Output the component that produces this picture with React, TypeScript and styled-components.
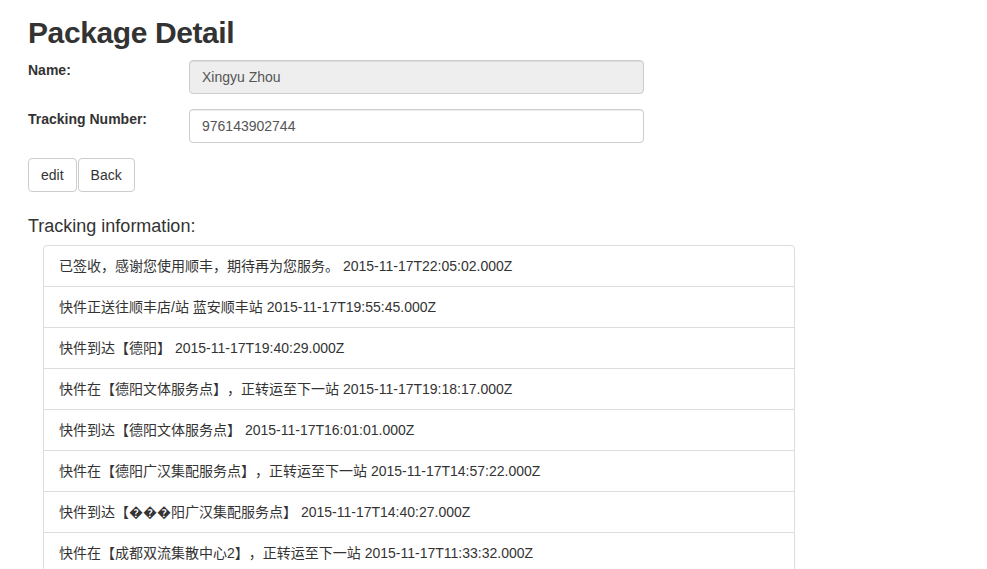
import React from 'react';
import styled, { createGlobalStyle } from 'styled-components';

const GlobalStyle = createGlobalStyle`
  html, body {
    margin: 0;
    padding: 0;
    background: #fff;
  }
  body {
    font-family: "Liberation Sans", Arial, "Noto Sans CJK SC", sans-serif;
    font-size: 14px;
    line-height: 1.42857;
    color: #333;
    text-spacing-trim: space-all;
  }
  * {
    box-sizing: border-box;
  }
`;

interface TrackingEvent {
  remark: string;
  time: string;
}

const events: TrackingEvent[] = [
  { remark: '已签收，感谢您使用顺丰，期待再为您服务。', time: '2015-11-17T22:05:02.000Z' },
  { remark: '快件正送往顺丰店/站 蓝安顺丰站', time: '2015-11-17T19:55:45.000Z' },
  { remark: '快件到达【德阳】', time: '2015-11-17T19:40:29.000Z' },
  { remark: '快件在【德阳文体服务点】，正转运至下一站', time: '2015-11-17T19:18:17.000Z' },
  { remark: '快件到达【德阳文体服务点】', time: '2015-11-17T16:01:01.000Z' },
  { remark: '快件在【德阳广汉集配服务点】，正转运至下一站', time: '2015-11-17T14:57:22.000Z' },
  { remark: '快件到达【���阳广汉集配服务点】', time: '2015-11-17T14:40:27.000Z' },
  { remark: '快件在【成都双流集散中心2】，正转运至下一站', time: '2015-11-17T11:33:32.000Z' },
];

export default function App() {
  return (
    <>
      <GlobalStyle />
      <Page>
        <Title>Package Detail</Title>
        <FormRow>
          <Label>Name:</Label>
          <Input value="Xingyu Zhou" disabled readOnly />
        </FormRow>
        <FormRow>
          <Label>Tracking Number:</Label>
          <Input value="976143902744" readOnly />
        </FormRow>
        <ButtonRow>
          <Button>edit</Button>
          <Button>Back</Button>
        </ButtonRow>
        <SectionTitle>Tracking information:</SectionTitle>
        <ListGroup>
          {events.map((e, i) => (
            <ListItem key={i}>
              {e.remark} {e.time}
            </ListItem>
          ))}
        </ListGroup>
      </Page>
    </>
  );
}

const Page = styled.div`
  padding: 16px 28px 0;
`;

const Title = styled.h2`
  font-size: 30px;
  font-weight: 700;
  letter-spacing: -0.4px;
  line-height: 1.1;
  margin: 0 0 11px;
  color: #333;
`;

const FormRow = styled.div`
  display: flex;
  align-items: flex-start;
  margin-bottom: 15px;
`;

const Label = styled.label`
  width: 161px;
  font-weight: 700;
  line-height: 20px;
  color: #333;
`;

const Input = styled.input`
  width: 455px;
  height: 34px;
  padding: 6px 12px;
  font-family: inherit;
  font-size: 14px;
  line-height: 20px;
  color: #555;
  background: #fff;
  border: 1px solid #ccc;
  border-radius: 4px;
  box-shadow: inset 0 1px 1px rgba(0, 0, 0, 0.075);
  outline: none;

  &:disabled {
    background: #eee;
    color: #555;
    -webkit-text-fill-color: #555;
    opacity: 1;
  }
`;

const ButtonRow = styled.div`
  display: flex;
  gap: 1px;
  margin-top: 1px;
`;

const Button = styled.button`
  height: 34px;
  padding: 6px 12px;
  font-family: inherit;
  font-size: 14px;
  line-height: 20px;
  color: #333;
  background: #fff;
  border: 1px solid #ccc;
  border-radius: 4px;
  cursor: pointer;
`;

const SectionTitle = styled.h4`
  font-size: 18px;
  font-weight: 500;
  line-height: 1.1;
  margin: 25px 0 8px;
  color: #333;
`;

const ListGroup = styled.ul`
  margin: 0 0 20px 15px;
  padding: 0;
  width: 752px;
  list-style: none;
`;

const ListItem = styled.li`
  padding: 10px 15px;
  line-height: 20px;
  background: #fff;
  border: 1px solid #ddd;
  margin-bottom: -1px;
  color: #333;

  &:first-child {
    border-top-left-radius: 4px;
    border-top-right-radius: 4px;
  }
  &:last-child {
    border-bottom-left-radius: 4px;
    border-bottom-right-radius: 4px;
  }
`;
